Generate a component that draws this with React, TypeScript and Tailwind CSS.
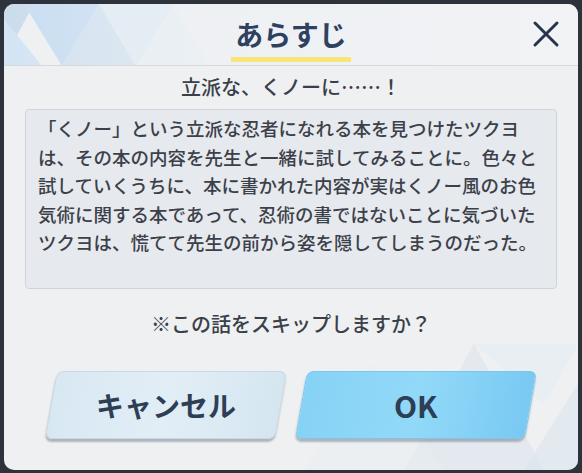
import React from "react";

const lines = [
  "「くノー」という立派な忍者になれる本を見つけたツクヨ",
  "は、その本の内容を先生と一緒に試してみることに。色々と",
  "試していくうちに、本に書かれた内容が実はくノー風のお色",
  "気術に関する本であって、忍術の書ではないことに気づいた",
  "ツクヨは、慌てて先生の前から姿を隠してしまうのだった。",
];

const Pattern = () => (
  <svg
    className="absolute inset-0 pointer-events-none"
    width="574"
    height="466"
    viewBox="0 0 574 466"
  >
    <polygon points="0,0 30,0 0,55" fill="#cbdcec" />
    <polygon points="20,0 95,0 58,62" fill="#c9def2" />
    <polygon points="0,62 0,15 38,62" fill="#d3e4f3" />
    <polygon points="58,62 95,0 132,62" fill="#d4e2ef" />
    <polygon points="95,0 170,0 132,62" fill="#e1ebf4" />
    <polygon points="132,62 170,0 205,62" fill="#e8eef4" />
    <polygon points="400,466 470,340 540,466" fill="#dfe6ee" opacity="0.7" />
    <polygon points="470,340 574,340 540,400" fill="#e6ecf2" opacity="0.6" />
    <polygon points="300,466 370,360 440,466" fill="#e8edf2" opacity="0.5" />
    <polygon points="520,466 574,380 574,466" fill="#dde5ee" opacity="0.7" />
  </svg>
);

const App = () => {
  return (
    <div
      className="w-[582px] h-[473px] bg-[#2e323b] pt-[4px] pl-[4px] pr-[4px] pb-[3px]"
      style={{ fontFamily: '"Noto Sans CJK JP", "Noto Sans", sans-serif' }}
    >
      <div className="relative h-full rounded-[10px] bg-[#eef0f2] overflow-hidden flex flex-col">
        <Pattern />
        <div className="relative h-[62px] flex flex-col items-center border-b border-[#d6dade] bg-gradient-to-r from-transparent via-[#eff2f5]/60 to-[#f1f3f5]">
          <div className="pt-[13px] text-[28px] leading-[34px] font-bold text-[#2f4160]">
            あらすじ
          </div>
          <div className="mt-[6px] h-[5px] w-[120px] bg-[#f7e57a]" />
          <button className="absolute right-[18px] top-[16px] w-[28px] h-[28px]">
            <svg width="28" height="28" viewBox="0 0 28 28">
              <path
                d="M3 3 L25 25 M25 3 L3 25"
                stroke="#27344a"
                strokeWidth="3"
                strokeLinecap="round"
              />
            </svg>
          </button>
        </div>

        <div className="relative pt-[9px] text-center text-[20px] leading-[24px] font-medium text-[#3a3f48]">
          立派な、くノーに……！
        </div>

        <div className="relative mx-[21px] mt-[10px] h-[180px] rounded-[4px] border border-[#cfd4da] bg-[#e6e9ed] pl-[12px] pt-[4px]">
          {lines.map((l, i) => (
            <div
              key={i}
              className="text-[18.5px] leading-[28.5px] font-medium text-[#3c4049] whitespace-nowrap"
            >
              {l}
            </div>
          ))}
        </div>

        <div className="relative mt-[23px] text-center text-[20px] leading-[24px] font-medium text-[#3a3f48]">
          ※この話をスキップしますか？
        </div>

        <div className="relative mt-[35px] flex justify-center gap-[20px]">
          <button className="w-[230px] h-[68px] rounded-[7px] -skew-x-[10deg] bg-gradient-to-r from-[#d8e8f3] via-[#e2eef6] to-[#d5e6f1] border border-[#c8d8e4] shadow-[0_3px_2px_rgba(60,70,90,0.35)] flex items-center justify-center">
            <span className="skew-x-[10deg] text-[28px] font-bold text-[#2d3e55]">
              キャンセル
            </span>
          </button>
          <button className="w-[230px] h-[68px] rounded-[7px] -skew-x-[10deg] bg-gradient-to-r from-[#86d2f6] via-[#92d9f8] to-[#79c9f3] border border-[#7cc6ec] shadow-[0_3px_2px_rgba(60,70,90,0.35)] flex items-center justify-center">
            <span className="skew-x-[10deg] text-[30px] font-bold text-[#2d3e55]">
              OK
            </span>
          </button>
        </div>
      </div>
    </div>
  );
};

export default App;
